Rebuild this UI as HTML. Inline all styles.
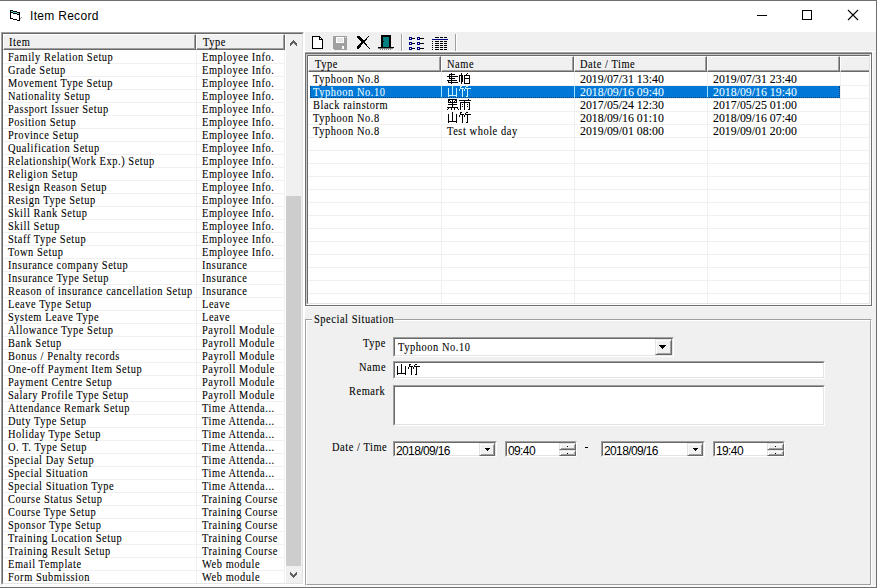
<!DOCTYPE html>
<html><head><meta charset="utf-8"><style>
html,body{margin:0;padding:0}
body{width:877px;height:588px;position:relative;overflow:hidden;background:#f0f0f0;font-family:"Liberation Serif",serif;}
body div{position:absolute}
.t{font:13px "Liberation Serif",serif;line-height:13px;white-space:pre;color:#000;transform:scaleX(0.8);transform-origin:0 0;letter-spacing:0.7px;-webkit-text-stroke:0.1px #000}
.d{font:13px "Liberation Serif",serif;line-height:13px;white-space:pre;color:#000;transform:scaleX(0.91);transform-origin:0 0;-webkit-text-stroke:0.1px #000}
.w{color:#e8fbff;-webkit-text-stroke-color:#e8fbff}
.s{font:12px "Liberation Sans",sans-serif;line-height:13px;white-space:pre;color:#000;letter-spacing:-0.62px}
</style></head><body>
<div style="left:0px;top:0px;width:877px;height:32px;background:#fff;"></div>
<div class="s" style="left:30px;top:10px;letter-spacing:0.3px;color:#000">Item Record</div>
<svg style="position:absolute;left:10px;top:10px" width="13" height="11" viewBox="0 0 13 11" shape-rendering="crispEdges"><rect x="0" y="0" width="3" height="1" fill="#000"/><rect x="0" y="1" width="1" height="1" fill="#000"/><rect x="1" y="1" width="2" height="1" fill="#5cc8c0"/><rect x="3" y="1" width="4" height="1" fill="#000"/><rect x="0" y="2" width="3" height="1" fill="#000"/><rect x="3" y="2" width="4" height="1" fill="#5cc8c0"/><rect x="7" y="2" width="3" height="1" fill="#000"/><rect x="0" y="3" width="1" height="1" fill="#000"/><rect x="1" y="3" width="2" height="1" fill="#fff"/><rect x="3" y="3" width="4" height="1" fill="#000"/><rect x="7" y="3" width="2" height="1" fill="#5cc8c0"/><rect x="9" y="3" width="1" height="1" fill="#000"/><rect x="0" y="4" width="1" height="1" fill="#000"/><rect x="1" y="4" width="6" height="1" fill="#fff"/><rect x="7" y="4" width="3" height="1" fill="#000"/><rect x="0" y="5" width="1" height="1" fill="#000"/><rect x="1" y="5" width="8" height="1" fill="#fff"/><rect x="9" y="5" width="1" height="1" fill="#000"/><rect x="0" y="6" width="1" height="1" fill="#000"/><rect x="1" y="6" width="8" height="1" fill="#fff"/><rect x="9" y="6" width="1" height="1" fill="#000"/><rect x="0" y="7" width="1" height="1" fill="#000"/><rect x="1" y="7" width="8" height="1" fill="#fff"/><rect x="9" y="7" width="1" height="1" fill="#000"/><rect x="11" y="7" width="1" height="1" fill="#999"/><rect x="0" y="8" width="3" height="1" fill="#000"/><rect x="3" y="8" width="6" height="1" fill="#fff"/><rect x="9" y="8" width="1" height="1" fill="#000"/><rect x="10" y="8" width="1" height="1" fill="#999"/><rect x="3" y="9" width="4" height="1" fill="#000"/><rect x="7" y="9" width="2" height="1" fill="#fff"/><rect x="9" y="9" width="1" height="1" fill="#000"/><rect x="7" y="10" width="3" height="1" fill="#000"/></svg>
<div style="left:757px;top:15px;width:10px;height:1px;background:#000;"></div>
<div style="left:802px;top:10px;width:10px;height:10px;background:transparent;border:1px solid #000;box-sizing:border-box"></div>
<svg style="position:absolute;left:847px;top:9px" width="12" height="12" viewBox="0 0 12 12"><path d="M1 1L11 11M11 1L1 11" stroke="#000" stroke-width="1.1"/></svg>
<div style="left:1px;top:32px;width:303px;height:553px;background:#fff;box-sizing:border-box;border-top:1px solid #a0a0a0;border-left:1px solid #a0a0a0;border-right:1px solid #fff;border-bottom:1px solid #fff"></div>
<div style="left:2px;top:33px;width:301px;height:551px;background:#fff;box-sizing:border-box;border-top:1px solid #696969;border-left:1px solid #696969;border-right:1px solid #e3e3e3;border-bottom:1px solid #e3e3e3"></div>
<div style="left:3px;top:34px;width:193px;height:16px;background:#f0f0f0;box-sizing:border-box;border-top:1px solid #fff;border-left:1px solid #fff;border-right:1px solid #696969;border-bottom:1px solid #696969;box-shadow:inset -1px -1px 0 #a0a0a0"></div>
<div style="left:196px;top:34px;width:89px;height:16px;background:#f0f0f0;box-sizing:border-box;border-top:1px solid #fff;border-left:1px solid #fff;border-right:1px solid #696969;border-bottom:1px solid #696969;box-shadow:inset -1px -1px 0 #a0a0a0"></div>
<div class="t" style="left:9px;top:35px;">Item</div>
<div class="t" style="left:203px;top:35px;">Type</div>
<div style="left:3px;top:63px;width:282px;height:1px;background:#f0f0f0;"></div>
<div style="left:3px;top:76px;width:282px;height:1px;background:#f0f0f0;"></div>
<div style="left:3px;top:89px;width:282px;height:1px;background:#f0f0f0;"></div>
<div style="left:3px;top:102px;width:282px;height:1px;background:#f0f0f0;"></div>
<div style="left:3px;top:115px;width:282px;height:1px;background:#f0f0f0;"></div>
<div style="left:3px;top:128px;width:282px;height:1px;background:#f0f0f0;"></div>
<div style="left:3px;top:141px;width:282px;height:1px;background:#f0f0f0;"></div>
<div style="left:3px;top:154px;width:282px;height:1px;background:#f0f0f0;"></div>
<div style="left:3px;top:167px;width:282px;height:1px;background:#f0f0f0;"></div>
<div style="left:3px;top:180px;width:282px;height:1px;background:#f0f0f0;"></div>
<div style="left:3px;top:193px;width:282px;height:1px;background:#f0f0f0;"></div>
<div style="left:3px;top:206px;width:282px;height:1px;background:#f0f0f0;"></div>
<div style="left:3px;top:219px;width:282px;height:1px;background:#f0f0f0;"></div>
<div style="left:3px;top:232px;width:282px;height:1px;background:#f0f0f0;"></div>
<div style="left:3px;top:245px;width:282px;height:1px;background:#f0f0f0;"></div>
<div style="left:3px;top:258px;width:282px;height:1px;background:#f0f0f0;"></div>
<div style="left:3px;top:271px;width:282px;height:1px;background:#f0f0f0;"></div>
<div style="left:3px;top:284px;width:282px;height:1px;background:#f0f0f0;"></div>
<div style="left:3px;top:297px;width:282px;height:1px;background:#f0f0f0;"></div>
<div style="left:3px;top:310px;width:282px;height:1px;background:#f0f0f0;"></div>
<div style="left:3px;top:323px;width:282px;height:1px;background:#f0f0f0;"></div>
<div style="left:3px;top:336px;width:282px;height:1px;background:#f0f0f0;"></div>
<div style="left:3px;top:349px;width:282px;height:1px;background:#f0f0f0;"></div>
<div style="left:3px;top:362px;width:282px;height:1px;background:#f0f0f0;"></div>
<div style="left:3px;top:375px;width:282px;height:1px;background:#f0f0f0;"></div>
<div style="left:3px;top:388px;width:282px;height:1px;background:#f0f0f0;"></div>
<div style="left:3px;top:401px;width:282px;height:1px;background:#f0f0f0;"></div>
<div style="left:3px;top:414px;width:282px;height:1px;background:#f0f0f0;"></div>
<div style="left:3px;top:427px;width:282px;height:1px;background:#f0f0f0;"></div>
<div style="left:3px;top:440px;width:282px;height:1px;background:#f0f0f0;"></div>
<div style="left:3px;top:453px;width:282px;height:1px;background:#f0f0f0;"></div>
<div style="left:3px;top:466px;width:282px;height:1px;background:#f0f0f0;"></div>
<div style="left:3px;top:479px;width:282px;height:1px;background:#f0f0f0;"></div>
<div style="left:3px;top:492px;width:282px;height:1px;background:#f0f0f0;"></div>
<div style="left:3px;top:505px;width:282px;height:1px;background:#f0f0f0;"></div>
<div style="left:3px;top:518px;width:282px;height:1px;background:#f0f0f0;"></div>
<div style="left:3px;top:531px;width:282px;height:1px;background:#f0f0f0;"></div>
<div style="left:3px;top:544px;width:282px;height:1px;background:#f0f0f0;"></div>
<div style="left:3px;top:557px;width:282px;height:1px;background:#f0f0f0;"></div>
<div style="left:3px;top:570px;width:282px;height:1px;background:#f0f0f0;"></div>
<div style="left:196px;top:50px;width:1px;height:533px;background:#f0f0f0;"></div>
<div style="left:284px;top:50px;width:1px;height:533px;background:#f0f0f0;"></div>
<div class="t" style="left:8px;top:50px;">Family Relation Setup</div>
<div class="t" style="left:202px;top:50px;">Employee Info.</div>
<div class="t" style="left:8px;top:63px;">Grade Setup</div>
<div class="t" style="left:202px;top:63px;">Employee Info.</div>
<div class="t" style="left:8px;top:76px;">Movement Type Setup</div>
<div class="t" style="left:202px;top:76px;">Employee Info.</div>
<div class="t" style="left:8px;top:89px;">Nationality Setup</div>
<div class="t" style="left:202px;top:89px;">Employee Info.</div>
<div class="t" style="left:8px;top:102px;">Passport Issuer Setup</div>
<div class="t" style="left:202px;top:102px;">Employee Info.</div>
<div class="t" style="left:8px;top:115px;">Position Setup</div>
<div class="t" style="left:202px;top:115px;">Employee Info.</div>
<div class="t" style="left:8px;top:128px;">Province Setup</div>
<div class="t" style="left:202px;top:128px;">Employee Info.</div>
<div class="t" style="left:8px;top:141px;">Qualification Setup</div>
<div class="t" style="left:202px;top:141px;">Employee Info.</div>
<div class="t" style="left:8px;top:154px;">Relationship(Work Exp.) Setup</div>
<div class="t" style="left:202px;top:154px;">Employee Info.</div>
<div class="t" style="left:8px;top:167px;">Religion Setup</div>
<div class="t" style="left:202px;top:167px;">Employee Info.</div>
<div class="t" style="left:8px;top:180px;">Resign Reason Setup</div>
<div class="t" style="left:202px;top:180px;">Employee Info.</div>
<div class="t" style="left:8px;top:193px;">Resign Type Setup</div>
<div class="t" style="left:202px;top:193px;">Employee Info.</div>
<div class="t" style="left:8px;top:206px;">Skill Rank Setup</div>
<div class="t" style="left:202px;top:206px;">Employee Info.</div>
<div class="t" style="left:8px;top:219px;">Skill Setup</div>
<div class="t" style="left:202px;top:219px;">Employee Info.</div>
<div class="t" style="left:8px;top:232px;">Staff Type Setup</div>
<div class="t" style="left:202px;top:232px;">Employee Info.</div>
<div class="t" style="left:8px;top:245px;">Town Setup</div>
<div class="t" style="left:202px;top:245px;">Employee Info.</div>
<div class="t" style="left:8px;top:258px;">Insurance company Setup</div>
<div class="t" style="left:202px;top:258px;">Insurance</div>
<div class="t" style="left:8px;top:271px;">Insurance Type Setup</div>
<div class="t" style="left:202px;top:271px;">Insurance</div>
<div class="t" style="left:8px;top:284px;">Reason of insurance cancellation Setup</div>
<div class="t" style="left:202px;top:284px;">Insurance</div>
<div class="t" style="left:8px;top:297px;">Leave Type Setup</div>
<div class="t" style="left:202px;top:297px;">Leave</div>
<div class="t" style="left:8px;top:310px;">System Leave Type</div>
<div class="t" style="left:202px;top:310px;">Leave</div>
<div class="t" style="left:8px;top:323px;">Allowance Type Setup</div>
<div class="t" style="left:202px;top:323px;">Payroll Module</div>
<div class="t" style="left:8px;top:336px;">Bank Setup</div>
<div class="t" style="left:202px;top:336px;">Payroll Module</div>
<div class="t" style="left:8px;top:349px;">Bonus / Penalty records</div>
<div class="t" style="left:202px;top:349px;">Payroll Module</div>
<div class="t" style="left:8px;top:362px;">One-off Payment Item Setup</div>
<div class="t" style="left:202px;top:362px;">Payroll Module</div>
<div class="t" style="left:8px;top:375px;">Payment Centre Setup</div>
<div class="t" style="left:202px;top:375px;">Payroll Module</div>
<div class="t" style="left:8px;top:388px;">Salary Profile Type Setup</div>
<div class="t" style="left:202px;top:388px;">Payroll Module</div>
<div class="t" style="left:8px;top:401px;">Attendance Remark Setup</div>
<div class="t" style="left:202px;top:401px;">Time Attenda...</div>
<div class="t" style="left:8px;top:414px;">Duty Type Setup</div>
<div class="t" style="left:202px;top:414px;">Time Attenda...</div>
<div class="t" style="left:8px;top:427px;">Holiday Type Setup</div>
<div class="t" style="left:202px;top:427px;">Time Attenda...</div>
<div class="t" style="left:8px;top:440px;">O. T. Type Setup</div>
<div class="t" style="left:202px;top:440px;">Time Attenda...</div>
<div class="t" style="left:8px;top:453px;">Special Day Setup</div>
<div class="t" style="left:202px;top:453px;">Time Attenda...</div>
<div class="t" style="left:8px;top:466px;">Special Situation</div>
<div class="t" style="left:202px;top:466px;">Time Attenda...</div>
<div class="t" style="left:8px;top:479px;">Special Situation Type</div>
<div class="t" style="left:202px;top:479px;">Time Attenda...</div>
<div class="t" style="left:8px;top:492px;">Course Status Setup</div>
<div class="t" style="left:202px;top:492px;">Training Course</div>
<div class="t" style="left:8px;top:505px;">Course Type Setup</div>
<div class="t" style="left:202px;top:505px;">Training Course</div>
<div class="t" style="left:8px;top:518px;">Sponsor Type Setup</div>
<div class="t" style="left:202px;top:518px;">Training Course</div>
<div class="t" style="left:8px;top:531px;">Training Location Setup</div>
<div class="t" style="left:202px;top:531px;">Training Course</div>
<div class="t" style="left:8px;top:544px;">Training Result Setup</div>
<div class="t" style="left:202px;top:544px;">Training Course</div>
<div class="t" style="left:8px;top:557px;">Email Template</div>
<div class="t" style="left:202px;top:557px;">Web module</div>
<div class="t" style="left:8px;top:570px;">Form Submission</div>
<div class="t" style="left:202px;top:570px;">Web module</div>
<div style="left:286px;top:34px;width:16px;height:549px;background:#f0f0f0;"></div>
<div style="left:286px;top:196px;width:15px;height:370px;background:#cdcdcd;"></div>
<svg style="position:absolute;left:290px;top:40px" width="7" height="6" viewBox="0 0 7 6" shape-rendering="crispEdges"><rect x="3" y="0" width="1" height="1" fill="#606060"/><rect x="2" y="1" width="3" height="1" fill="#606060"/><rect x="1" y="2" width="5" height="1" fill="#606060"/><rect x="0" y="3" width="3" height="1" fill="#606060"/><rect x="4" y="3" width="3" height="1" fill="#606060"/><rect x="0" y="4" width="2" height="1" fill="#606060"/><rect x="5" y="4" width="2" height="1" fill="#606060"/><rect x="0" y="5" width="1" height="1" fill="#606060"/><rect x="6" y="5" width="1" height="1" fill="#606060"/></svg>
<svg style="position:absolute;left:290px;top:572px" width="7" height="6" viewBox="0 0 7 6" shape-rendering="crispEdges"><rect x="0" y="0" width="1" height="1" fill="#606060"/><rect x="6" y="0" width="1" height="1" fill="#606060"/><rect x="0" y="1" width="2" height="1" fill="#606060"/><rect x="5" y="1" width="2" height="1" fill="#606060"/><rect x="0" y="2" width="3" height="1" fill="#606060"/><rect x="4" y="2" width="3" height="1" fill="#606060"/><rect x="1" y="3" width="5" height="1" fill="#606060"/><rect x="2" y="4" width="3" height="1" fill="#606060"/><rect x="3" y="5" width="1" height="1" fill="#606060"/></svg>
<div style="left:304px;top:32px;width:1px;height:553px;background:#fff;"></div>
<div style="left:401px;top:34px;width:1px;height:18px;background:#a0a0a0;"></div>
<div style="left:402px;top:34px;width:1px;height:18px;background:#fff;"></div>
<div style="left:455px;top:34px;width:1px;height:18px;background:#a0a0a0;"></div>
<div style="left:456px;top:34px;width:1px;height:18px;background:#fff;"></div>
<svg style="position:absolute;left:312px;top:36px" width="11" height="13" viewBox="0 0 11 13" shape-rendering="crispEdges"><rect x="0" y="0" width="8" height="1" fill="#000"/><rect x="0" y="1" width="1" height="1" fill="#000"/><rect x="1" y="1" width="6" height="1" fill="#fff"/><rect x="7" y="1" width="2" height="1" fill="#000"/><rect x="0" y="2" width="1" height="1" fill="#000"/><rect x="1" y="2" width="6" height="1" fill="#fff"/><rect x="7" y="2" width="1" height="1" fill="#000"/><rect x="8" y="2" width="1" height="1" fill="#fff"/><rect x="9" y="2" width="1" height="1" fill="#000"/><rect x="0" y="3" width="1" height="1" fill="#000"/><rect x="1" y="3" width="6" height="1" fill="#fff"/><rect x="7" y="3" width="4" height="1" fill="#000"/><rect x="0" y="4" width="1" height="1" fill="#000"/><rect x="1" y="4" width="9" height="1" fill="#fff"/><rect x="10" y="4" width="1" height="1" fill="#000"/><rect x="0" y="5" width="1" height="1" fill="#000"/><rect x="1" y="5" width="9" height="1" fill="#fff"/><rect x="10" y="5" width="1" height="1" fill="#000"/><rect x="0" y="6" width="1" height="1" fill="#000"/><rect x="1" y="6" width="9" height="1" fill="#fff"/><rect x="10" y="6" width="1" height="1" fill="#000"/><rect x="0" y="7" width="1" height="1" fill="#000"/><rect x="1" y="7" width="9" height="1" fill="#fff"/><rect x="10" y="7" width="1" height="1" fill="#000"/><rect x="0" y="8" width="1" height="1" fill="#000"/><rect x="1" y="8" width="9" height="1" fill="#fff"/><rect x="10" y="8" width="1" height="1" fill="#000"/><rect x="0" y="9" width="1" height="1" fill="#000"/><rect x="1" y="9" width="9" height="1" fill="#fff"/><rect x="10" y="9" width="1" height="1" fill="#000"/><rect x="0" y="10" width="1" height="1" fill="#000"/><rect x="1" y="10" width="9" height="1" fill="#fff"/><rect x="10" y="10" width="1" height="1" fill="#000"/><rect x="0" y="11" width="1" height="1" fill="#000"/><rect x="1" y="11" width="9" height="1" fill="#fff"/><rect x="10" y="11" width="1" height="1" fill="#000"/><rect x="0" y="12" width="11" height="1" fill="#000"/></svg>
<svg style="position:absolute;left:333px;top:36px" width="14" height="14" viewBox="0 0 14 14" shape-rendering="crispEdges"><rect x="0" y="0" width="14" height="1" fill="#a0a0a0"/><rect x="0" y="1" width="3" height="1" fill="#a0a0a0"/><rect x="3" y="1" width="8" height="1" fill="#fff"/><rect x="11" y="1" width="1" height="1" fill="#a0a0a0"/><rect x="12" y="1" width="1" height="1" fill="#fff"/><rect x="13" y="1" width="1" height="1" fill="#a0a0a0"/><rect x="0" y="2" width="3" height="1" fill="#a0a0a0"/><rect x="3" y="2" width="1" height="1" fill="#fff"/><rect x="4" y="2" width="6" height="1" fill="#e6e6e6"/><rect x="10" y="2" width="1" height="1" fill="#fff"/><rect x="11" y="2" width="3" height="1" fill="#a0a0a0"/><rect x="0" y="3" width="3" height="1" fill="#a0a0a0"/><rect x="3" y="3" width="1" height="1" fill="#fff"/><rect x="4" y="3" width="6" height="1" fill="#e6e6e6"/><rect x="10" y="3" width="1" height="1" fill="#fff"/><rect x="11" y="3" width="3" height="1" fill="#a0a0a0"/><rect x="0" y="4" width="3" height="1" fill="#a0a0a0"/><rect x="3" y="4" width="1" height="1" fill="#fff"/><rect x="4" y="4" width="6" height="1" fill="#e6e6e6"/><rect x="10" y="4" width="1" height="1" fill="#fff"/><rect x="11" y="4" width="3" height="1" fill="#a0a0a0"/><rect x="0" y="5" width="3" height="1" fill="#a0a0a0"/><rect x="3" y="5" width="1" height="1" fill="#fff"/><rect x="4" y="5" width="6" height="1" fill="#e6e6e6"/><rect x="10" y="5" width="1" height="1" fill="#fff"/><rect x="11" y="5" width="3" height="1" fill="#a0a0a0"/><rect x="0" y="6" width="3" height="1" fill="#a0a0a0"/><rect x="3" y="6" width="8" height="1" fill="#fff"/><rect x="11" y="6" width="3" height="1" fill="#a0a0a0"/><rect x="0" y="7" width="14" height="1" fill="#a0a0a0"/><rect x="0" y="8" width="14" height="1" fill="#a0a0a0"/><rect x="0" y="9" width="14" height="1" fill="#a0a0a0"/><rect x="0" y="10" width="9" height="1" fill="#a0a0a0"/><rect x="9" y="10" width="2" height="1" fill="#fff"/><rect x="11" y="10" width="3" height="1" fill="#a0a0a0"/><rect x="0" y="11" width="9" height="1" fill="#a0a0a0"/><rect x="9" y="11" width="2" height="1" fill="#fff"/><rect x="11" y="11" width="3" height="1" fill="#a0a0a0"/><rect x="0" y="12" width="9" height="1" fill="#a0a0a0"/><rect x="9" y="12" width="2" height="1" fill="#fff"/><rect x="11" y="12" width="3" height="1" fill="#a0a0a0"/><rect x="0" y="13" width="1" height="1" fill="#fff"/><rect x="1" y="13" width="13" height="1" fill="#a0a0a0"/></svg>
<svg style="position:absolute;left:357px;top:36px" width="13" height="13" viewBox="0 0 13 13" shape-rendering="crispEdges"><rect x="0" y="0" width="3" height="1" fill="#000"/><rect x="11" y="0" width="1" height="1" fill="#000"/><rect x="0" y="1" width="4" height="1" fill="#000"/><rect x="10" y="1" width="1" height="1" fill="#000"/><rect x="1" y="2" width="4" height="1" fill="#000"/><rect x="9" y="2" width="1" height="1" fill="#000"/><rect x="2" y="3" width="4" height="1" fill="#000"/><rect x="8" y="3" width="2" height="1" fill="#000"/><rect x="3" y="4" width="6" height="1" fill="#000"/><rect x="4" y="5" width="4" height="1" fill="#000"/><rect x="4" y="6" width="4" height="1" fill="#000"/><rect x="3" y="7" width="3" height="1" fill="#000"/><rect x="7" y="7" width="2" height="1" fill="#000"/><rect x="2" y="8" width="3" height="1" fill="#000"/><rect x="8" y="8" width="2" height="1" fill="#000"/><rect x="1" y="9" width="3" height="1" fill="#000"/><rect x="9" y="9" width="1" height="1" fill="#000"/><rect x="0" y="10" width="4" height="1" fill="#000"/><rect x="10" y="10" width="1" height="1" fill="#000"/><rect x="0" y="11" width="3" height="1" fill="#000"/><rect x="11" y="11" width="1" height="1" fill="#000"/><rect x="0" y="12" width="2" height="1" fill="#000"/><rect x="12" y="12" width="1" height="1" fill="#000"/></svg>
<svg style="position:absolute;left:378px;top:35px" width="16" height="15" viewBox="0 0 16 15" shape-rendering="crispEdges"><rect x="3" y="0" width="10" height="1" fill="#000"/><rect x="3" y="1" width="10" height="1" fill="#000"/><rect x="3" y="2" width="2" height="1" fill="#000"/><rect x="5" y="2" width="6" height="1" fill="#008080"/><rect x="11" y="2" width="2" height="1" fill="#000"/><rect x="3" y="3" width="2" height="1" fill="#000"/><rect x="5" y="3" width="6" height="1" fill="#008080"/><rect x="11" y="3" width="2" height="1" fill="#000"/><rect x="3" y="4" width="2" height="1" fill="#000"/><rect x="5" y="4" width="6" height="1" fill="#008080"/><rect x="11" y="4" width="2" height="1" fill="#000"/><rect x="3" y="5" width="2" height="1" fill="#000"/><rect x="5" y="5" width="6" height="1" fill="#008080"/><rect x="11" y="5" width="2" height="1" fill="#000"/><rect x="3" y="6" width="3" height="1" fill="#000"/><rect x="6" y="6" width="5" height="1" fill="#008080"/><rect x="11" y="6" width="2" height="1" fill="#000"/><rect x="3" y="7" width="2" height="1" fill="#000"/><rect x="5" y="7" width="6" height="1" fill="#008080"/><rect x="11" y="7" width="2" height="1" fill="#000"/><rect x="3" y="8" width="2" height="1" fill="#000"/><rect x="5" y="8" width="6" height="1" fill="#008080"/><rect x="11" y="8" width="2" height="1" fill="#000"/><rect x="3" y="9" width="2" height="1" fill="#000"/><rect x="5" y="9" width="6" height="1" fill="#008080"/><rect x="11" y="9" width="2" height="1" fill="#000"/><rect x="3" y="10" width="2" height="1" fill="#000"/><rect x="5" y="10" width="6" height="1" fill="#008080"/><rect x="11" y="10" width="2" height="1" fill="#000"/><rect x="3" y="11" width="2" height="1" fill="#000"/><rect x="5" y="11" width="6" height="1" fill="#008080"/><rect x="11" y="11" width="2" height="1" fill="#000"/><rect x="0" y="12" width="16" height="1" fill="#000"/><rect x="0" y="13" width="15" height="1" fill="#808080"/><rect x="2" y="14" width="1" height="1" fill="#808080"/><rect x="4" y="14" width="1" height="1" fill="#808080"/><rect x="6" y="14" width="1" height="1" fill="#808080"/><rect x="8" y="14" width="1" height="1" fill="#808080"/><rect x="10" y="14" width="1" height="1" fill="#808080"/><rect x="12" y="14" width="1" height="1" fill="#808080"/></svg>
<svg style="position:absolute;left:409px;top:37px" width="16" height="13" viewBox="0 0 16 13" shape-rendering="crispEdges"><rect x="0" y="0" width="3" height="1" fill="#000080"/><rect x="8" y="0" width="3" height="1" fill="#000080"/><rect x="0" y="1" width="1" height="1" fill="#000080"/><rect x="1" y="1" width="1" height="1" fill="#fff"/><rect x="2" y="1" width="1" height="1" fill="#000080"/><rect x="3" y="1" width="3" height="1" fill="#000"/><rect x="8" y="1" width="1" height="1" fill="#000080"/><rect x="9" y="1" width="1" height="1" fill="#fff"/><rect x="10" y="1" width="1" height="1" fill="#000080"/><rect x="11" y="1" width="4" height="1" fill="#000"/><rect x="0" y="2" width="3" height="1" fill="#000080"/><rect x="8" y="2" width="3" height="1" fill="#000080"/><rect x="0" y="5" width="3" height="1" fill="#000080"/><rect x="8" y="5" width="3" height="1" fill="#000080"/><rect x="0" y="6" width="1" height="1" fill="#000080"/><rect x="1" y="6" width="1" height="1" fill="#fff"/><rect x="2" y="6" width="1" height="1" fill="#000080"/><rect x="3" y="6" width="3" height="1" fill="#000"/><rect x="8" y="6" width="1" height="1" fill="#000080"/><rect x="9" y="6" width="1" height="1" fill="#fff"/><rect x="10" y="6" width="1" height="1" fill="#000080"/><rect x="11" y="6" width="4" height="1" fill="#000"/><rect x="0" y="7" width="3" height="1" fill="#000080"/><rect x="8" y="7" width="3" height="1" fill="#000080"/><rect x="0" y="10" width="3" height="1" fill="#000080"/><rect x="8" y="10" width="3" height="1" fill="#000080"/><rect x="0" y="11" width="1" height="1" fill="#000080"/><rect x="1" y="11" width="1" height="1" fill="#fff"/><rect x="2" y="11" width="1" height="1" fill="#000080"/><rect x="3" y="11" width="3" height="1" fill="#000"/><rect x="8" y="11" width="1" height="1" fill="#000080"/><rect x="9" y="11" width="1" height="1" fill="#fff"/><rect x="10" y="11" width="1" height="1" fill="#000080"/><rect x="11" y="11" width="4" height="1" fill="#000"/><rect x="0" y="12" width="3" height="1" fill="#000080"/><rect x="8" y="12" width="3" height="1" fill="#000080"/></svg>
<svg style="position:absolute;left:432px;top:37px" width="16" height="13" viewBox="0 0 16 13" shape-rendering="crispEdges"><rect x="3" y="0" width="4" height="1" fill="#000"/><rect x="8" y="0" width="3" height="1" fill="#000"/><rect x="12" y="0" width="3" height="1" fill="#000"/><rect x="0" y="2" width="16" height="1" fill="#000080"/><rect x="0" y="4" width="1" height="1" fill="#000"/><rect x="3" y="4" width="4" height="1" fill="#000"/><rect x="8" y="4" width="3" height="1" fill="#000"/><rect x="12" y="4" width="3" height="1" fill="#000"/><rect x="0" y="6" width="1" height="1" fill="#000"/><rect x="3" y="6" width="4" height="1" fill="#000"/><rect x="8" y="6" width="3" height="1" fill="#000"/><rect x="12" y="6" width="3" height="1" fill="#000"/><rect x="0" y="8" width="1" height="1" fill="#000"/><rect x="3" y="8" width="4" height="1" fill="#000"/><rect x="8" y="8" width="3" height="1" fill="#000"/><rect x="12" y="8" width="3" height="1" fill="#000"/><rect x="0" y="10" width="1" height="1" fill="#000"/><rect x="3" y="10" width="4" height="1" fill="#000"/><rect x="8" y="10" width="3" height="1" fill="#000"/><rect x="12" y="10" width="3" height="1" fill="#000"/><rect x="0" y="12" width="1" height="1" fill="#000"/><rect x="3" y="12" width="4" height="1" fill="#000"/><rect x="8" y="12" width="3" height="1" fill="#000"/><rect x="12" y="12" width="3" height="1" fill="#000"/></svg>
<div style="left:305px;top:51px;width:571px;height:1px;background:#fff;"></div>
<div style="left:305px;top:52px;width:567px;height:254px;background:#fff;box-sizing:border-box;border:1px solid #6e6e6e"></div>
<div style="left:305px;top:52px;width:567px;height:1px;background:#a0a0a0;"></div>
<div style="left:305px;top:53px;width:567px;height:1px;background:#6e6e6e;"></div>
<div style="left:872px;top:52px;width:1px;height:255px;background:#fafafa;"></div>
<div style="left:305px;top:306px;width:568px;height:1px;background:#fafafa;"></div>
<div style="left:306px;top:54px;width:565px;height:251px;background:#fff;box-sizing:border-box;border-top:1px solid #c8c8c8;border-left:1px solid #c8c8c8;border-right:1px solid #fff;border-bottom:1px solid #fff"></div>
<div style="left:307px;top:55px;width:563px;height:249px;background:#fff;box-sizing:border-box;border-top:1px solid #696969;border-left:1px solid #696969;border-right:1px solid #e3e3e3;border-bottom:1px solid #e3e3e3"></div>
<div style="left:308px;top:56px;width:133px;height:16px;background:#f0f0f0;box-sizing:border-box;border-top:1px solid #fff;border-left:1px solid #fff;border-right:1px solid #696969;border-bottom:1px solid #696969;box-shadow:inset -1px -1px 0 #a0a0a0"></div>
<div style="left:441px;top:56px;width:133px;height:16px;background:#f0f0f0;box-sizing:border-box;border-top:1px solid #fff;border-left:1px solid #fff;border-right:1px solid #696969;border-bottom:1px solid #696969;box-shadow:inset -1px -1px 0 #a0a0a0"></div>
<div style="left:574px;top:56px;width:133px;height:16px;background:#f0f0f0;box-sizing:border-box;border-top:1px solid #fff;border-left:1px solid #fff;border-right:1px solid #696969;border-bottom:1px solid #696969;box-shadow:inset -1px -1px 0 #a0a0a0"></div>
<div style="left:707px;top:56px;width:133px;height:16px;background:#f0f0f0;box-sizing:border-box;border-top:1px solid #fff;border-left:1px solid #fff;border-right:1px solid #696969;border-bottom:1px solid #696969;box-shadow:inset -1px -1px 0 #a0a0a0"></div>
<div style="left:840px;top:56px;width:29px;height:16px;background:#f0f0f0;box-sizing:border-box;border-top:1px solid #fff;border-left:1px solid #fff;border-bottom:1px solid #696969;box-shadow:inset 0 -1px 0 #a0a0a0"></div>
<div class="t" style="left:315px;top:57px;">Type</div>
<div class="t" style="left:447px;top:57px;">Name</div>
<div class="t" style="left:580px;top:57px;">Date / Time</div>
<div style="left:308px;top:85px;width:561px;height:1px;background:#f0f0f0;"></div>
<div style="left:308px;top:98px;width:561px;height:1px;background:#f0f0f0;"></div>
<div style="left:308px;top:111px;width:561px;height:1px;background:#f0f0f0;"></div>
<div style="left:308px;top:124px;width:561px;height:1px;background:#f0f0f0;"></div>
<div style="left:308px;top:137px;width:561px;height:1px;background:#f0f0f0;"></div>
<div style="left:308px;top:150px;width:561px;height:1px;background:#f0f0f0;"></div>
<div style="left:308px;top:163px;width:561px;height:1px;background:#f0f0f0;"></div>
<div style="left:308px;top:176px;width:561px;height:1px;background:#f0f0f0;"></div>
<div style="left:308px;top:189px;width:561px;height:1px;background:#f0f0f0;"></div>
<div style="left:308px;top:202px;width:561px;height:1px;background:#f0f0f0;"></div>
<div style="left:308px;top:215px;width:561px;height:1px;background:#f0f0f0;"></div>
<div style="left:308px;top:228px;width:561px;height:1px;background:#f0f0f0;"></div>
<div style="left:308px;top:241px;width:561px;height:1px;background:#f0f0f0;"></div>
<div style="left:308px;top:254px;width:561px;height:1px;background:#f0f0f0;"></div>
<div style="left:308px;top:267px;width:561px;height:1px;background:#f0f0f0;"></div>
<div style="left:308px;top:280px;width:561px;height:1px;background:#f0f0f0;"></div>
<div style="left:308px;top:293px;width:561px;height:1px;background:#f0f0f0;"></div>
<div style="left:441px;top:72px;width:1px;height:231px;background:#f0f0f0;"></div>
<div style="left:574px;top:72px;width:1px;height:231px;background:#f0f0f0;"></div>
<div style="left:707px;top:72px;width:1px;height:231px;background:#f0f0f0;"></div>
<div style="left:840px;top:72px;width:1px;height:231px;background:#f0f0f0;"></div>
<div style="left:310px;top:86px;width:530px;height:12px;background:#0078d7;"></div>
<div style="left:441px;top:86px;width:1px;height:12px;background:#9be7ff;"></div>
<div style="left:574px;top:86px;width:1px;height:12px;background:#9be7ff;"></div>
<div style="left:707px;top:86px;width:1px;height:12px;background:#9be7ff;"></div>
<div style="left:310px;top:86px;width:530px;height:12px;background:transparent;box-sizing:border-box;border-left:1px dotted #0a2a4a;border-right:1px dotted #0a2a4a;border-bottom:1px dotted #0a2a4a;opacity:0.7"></div>
<div class="t" style="left:313px;top:72px;">Typhoon No.8</div>
<svg style="position:absolute;left:447px;top:73px" width="12" height="11" viewBox="0 0 12 11" shape-rendering="crispEdges"><rect x="4" y="0" width="1" height="1" fill="#000"/><rect x="2" y="1" width="6" height="1" fill="#000"/><rect x="2" y="2" width="1" height="1" fill="#000"/><rect x="4" y="2" width="1" height="1" fill="#000"/><rect x="0" y="3" width="11" height="1" fill="#000"/><rect x="2" y="4" width="1" height="1" fill="#000"/><rect x="4" y="4" width="1" height="1" fill="#000"/><rect x="2" y="5" width="6" height="1" fill="#000"/><rect x="4" y="6" width="1" height="1" fill="#000"/><rect x="0" y="7" width="10" height="1" fill="#000"/><rect x="1" y="8" width="1" height="1" fill="#000"/><rect x="4" y="8" width="1" height="1" fill="#000"/><rect x="1" y="9" width="10" height="1" fill="#000"/><rect x="4" y="10" width="1" height="1" fill="#000"/></svg>
<svg style="position:absolute;left:459px;top:73px" width="12" height="11" viewBox="0 0 12 11" shape-rendering="crispEdges"><rect x="2" y="0" width="1" height="1" fill="#000"/><rect x="8" y="0" width="1" height="1" fill="#000"/><rect x="2" y="1" width="1" height="1" fill="#000"/><rect x="7" y="1" width="1" height="1" fill="#000"/><rect x="0" y="2" width="4" height="1" fill="#000"/><rect x="5" y="2" width="6" height="1" fill="#000"/><rect x="0" y="3" width="1" height="1" fill="#000"/><rect x="2" y="3" width="2" height="1" fill="#000"/><rect x="5" y="3" width="1" height="1" fill="#000"/><rect x="10" y="3" width="1" height="1" fill="#000"/><rect x="0" y="4" width="1" height="1" fill="#000"/><rect x="2" y="4" width="2" height="1" fill="#000"/><rect x="5" y="4" width="1" height="1" fill="#000"/><rect x="10" y="4" width="1" height="1" fill="#000"/><rect x="0" y="5" width="1" height="1" fill="#000"/><rect x="2" y="5" width="2" height="1" fill="#000"/><rect x="5" y="5" width="6" height="1" fill="#000"/><rect x="0" y="6" width="1" height="1" fill="#000"/><rect x="2" y="6" width="2" height="1" fill="#000"/><rect x="5" y="6" width="1" height="1" fill="#000"/><rect x="10" y="6" width="1" height="1" fill="#000"/><rect x="0" y="7" width="1" height="1" fill="#000"/><rect x="2" y="7" width="2" height="1" fill="#000"/><rect x="5" y="7" width="1" height="1" fill="#000"/><rect x="10" y="7" width="1" height="1" fill="#000"/><rect x="0" y="8" width="1" height="1" fill="#000"/><rect x="2" y="8" width="2" height="1" fill="#000"/><rect x="5" y="8" width="1" height="1" fill="#000"/><rect x="10" y="8" width="1" height="1" fill="#000"/><rect x="2" y="9" width="1" height="1" fill="#000"/><rect x="5" y="9" width="1" height="1" fill="#000"/><rect x="10" y="9" width="1" height="1" fill="#000"/><rect x="2" y="10" width="1" height="1" fill="#000"/><rect x="5" y="10" width="6" height="1" fill="#000"/></svg>
<div class="d" style="left:580px;top:72px;">2019/07/31 13:40</div>
<div class="d" style="left:713px;top:72px;">2019/07/31 23:40</div>
<div class="t w" style="left:313px;top:85px;">Typhoon No.10</div>
<svg style="position:absolute;left:447px;top:86px" width="12" height="11" viewBox="0 0 12 11" shape-rendering="crispEdges"><rect x="5" y="0" width="1" height="1" fill="#c8f4ff"/><rect x="5" y="1" width="1" height="1" fill="#c8f4ff"/><rect x="1" y="2" width="1" height="1" fill="#c8f4ff"/><rect x="5" y="2" width="1" height="1" fill="#c8f4ff"/><rect x="9" y="2" width="1" height="1" fill="#c8f4ff"/><rect x="1" y="3" width="1" height="1" fill="#c8f4ff"/><rect x="5" y="3" width="1" height="1" fill="#c8f4ff"/><rect x="9" y="3" width="1" height="1" fill="#c8f4ff"/><rect x="1" y="4" width="1" height="1" fill="#c8f4ff"/><rect x="5" y="4" width="1" height="1" fill="#c8f4ff"/><rect x="9" y="4" width="1" height="1" fill="#c8f4ff"/><rect x="1" y="5" width="1" height="1" fill="#c8f4ff"/><rect x="5" y="5" width="1" height="1" fill="#c8f4ff"/><rect x="9" y="5" width="1" height="1" fill="#c8f4ff"/><rect x="1" y="6" width="1" height="1" fill="#c8f4ff"/><rect x="5" y="6" width="1" height="1" fill="#c8f4ff"/><rect x="9" y="6" width="1" height="1" fill="#c8f4ff"/><rect x="1" y="7" width="1" height="1" fill="#c8f4ff"/><rect x="5" y="7" width="1" height="1" fill="#c8f4ff"/><rect x="9" y="7" width="1" height="1" fill="#c8f4ff"/><rect x="1" y="8" width="1" height="1" fill="#c8f4ff"/><rect x="5" y="8" width="1" height="1" fill="#c8f4ff"/><rect x="9" y="8" width="1" height="1" fill="#c8f4ff"/><rect x="1" y="9" width="9" height="1" fill="#c8f4ff"/><rect x="1" y="10" width="1" height="1" fill="#c8f4ff"/><rect x="9" y="10" width="1" height="1" fill="#c8f4ff"/></svg>
<svg style="position:absolute;left:459px;top:86px" width="12" height="11" viewBox="0 0 12 11" shape-rendering="crispEdges"><rect x="1" y="0" width="2" height="1" fill="#c8f4ff"/><rect x="7" y="0" width="2" height="1" fill="#c8f4ff"/><rect x="1" y="1" width="1" height="1" fill="#c8f4ff"/><rect x="6" y="1" width="1" height="1" fill="#c8f4ff"/><rect x="1" y="2" width="4" height="1" fill="#c8f4ff"/><rect x="6" y="2" width="6" height="1" fill="#c8f4ff"/><rect x="0" y="3" width="1" height="1" fill="#c8f4ff"/><rect x="3" y="3" width="1" height="1" fill="#c8f4ff"/><rect x="5" y="3" width="1" height="1" fill="#c8f4ff"/><rect x="8" y="3" width="1" height="1" fill="#c8f4ff"/><rect x="0" y="4" width="1" height="1" fill="#c8f4ff"/><rect x="3" y="4" width="1" height="1" fill="#c8f4ff"/><rect x="5" y="4" width="1" height="1" fill="#c8f4ff"/><rect x="8" y="4" width="1" height="1" fill="#c8f4ff"/><rect x="3" y="5" width="1" height="1" fill="#c8f4ff"/><rect x="8" y="5" width="1" height="1" fill="#c8f4ff"/><rect x="3" y="6" width="1" height="1" fill="#c8f4ff"/><rect x="8" y="6" width="1" height="1" fill="#c8f4ff"/><rect x="3" y="7" width="1" height="1" fill="#c8f4ff"/><rect x="8" y="7" width="1" height="1" fill="#c8f4ff"/><rect x="3" y="8" width="1" height="1" fill="#c8f4ff"/><rect x="8" y="8" width="1" height="1" fill="#c8f4ff"/><rect x="3" y="9" width="1" height="1" fill="#c8f4ff"/><rect x="8" y="9" width="1" height="1" fill="#c8f4ff"/><rect x="3" y="10" width="1" height="1" fill="#c8f4ff"/><rect x="7" y="10" width="2" height="1" fill="#c8f4ff"/></svg>
<div class="d w" style="left:580px;top:85px;">2018/09/16 09:40</div>
<div class="d w" style="left:713px;top:85px;">2018/09/16 19:40</div>
<div class="t" style="left:313px;top:98px;">Black rainstorm</div>
<svg style="position:absolute;left:447px;top:99px" width="12" height="11" viewBox="0 0 12 11" shape-rendering="crispEdges"><rect x="1" y="0" width="9" height="1" fill="#000"/><rect x="1" y="1" width="2" height="1" fill="#000"/><rect x="5" y="1" width="1" height="1" fill="#000"/><rect x="8" y="1" width="2" height="1" fill="#000"/><rect x="1" y="2" width="1" height="1" fill="#000"/><rect x="3" y="2" width="1" height="1" fill="#000"/><rect x="5" y="2" width="1" height="1" fill="#000"/><rect x="7" y="2" width="1" height="1" fill="#000"/><rect x="9" y="2" width="1" height="1" fill="#000"/><rect x="1" y="3" width="9" height="1" fill="#000"/><rect x="5" y="4" width="1" height="1" fill="#000"/><rect x="1" y="5" width="9" height="1" fill="#000"/><rect x="5" y="6" width="1" height="1" fill="#000"/><rect x="5" y="7" width="1" height="1" fill="#000"/><rect x="0" y="8" width="11" height="1" fill="#000"/><rect x="1" y="9" width="1" height="1" fill="#000"/><rect x="4" y="9" width="1" height="1" fill="#000"/><rect x="7" y="9" width="1" height="1" fill="#000"/><rect x="10" y="9" width="1" height="1" fill="#000"/><rect x="0" y="10" width="1" height="1" fill="#000"/><rect x="4" y="10" width="1" height="1" fill="#000"/><rect x="7" y="10" width="1" height="1" fill="#000"/><rect x="11" y="10" width="1" height="1" fill="#000"/></svg>
<svg style="position:absolute;left:459px;top:99px" width="12" height="11" viewBox="0 0 12 11" shape-rendering="crispEdges"><rect x="9" y="0" width="1" height="1" fill="#000"/><rect x="0" y="1" width="12" height="1" fill="#000"/><rect x="5" y="2" width="1" height="1" fill="#000"/><rect x="1" y="3" width="10" height="1" fill="#000"/><rect x="1" y="4" width="1" height="1" fill="#000"/><rect x="5" y="4" width="1" height="1" fill="#000"/><rect x="10" y="4" width="1" height="1" fill="#000"/><rect x="1" y="5" width="1" height="1" fill="#000"/><rect x="3" y="5" width="1" height="1" fill="#000"/><rect x="5" y="5" width="1" height="1" fill="#000"/><rect x="8" y="5" width="1" height="1" fill="#000"/><rect x="10" y="5" width="1" height="1" fill="#000"/><rect x="1" y="6" width="1" height="1" fill="#000"/><rect x="5" y="6" width="1" height="1" fill="#000"/><rect x="10" y="6" width="1" height="1" fill="#000"/><rect x="1" y="7" width="1" height="1" fill="#000"/><rect x="3" y="7" width="1" height="1" fill="#000"/><rect x="5" y="7" width="1" height="1" fill="#000"/><rect x="8" y="7" width="1" height="1" fill="#000"/><rect x="10" y="7" width="1" height="1" fill="#000"/><rect x="1" y="8" width="1" height="1" fill="#000"/><rect x="5" y="8" width="1" height="1" fill="#000"/><rect x="10" y="8" width="1" height="1" fill="#000"/><rect x="1" y="9" width="1" height="1" fill="#000"/><rect x="5" y="9" width="1" height="1" fill="#000"/><rect x="10" y="9" width="1" height="1" fill="#000"/><rect x="1" y="10" width="1" height="1" fill="#000"/><rect x="5" y="10" width="1" height="1" fill="#000"/><rect x="9" y="10" width="2" height="1" fill="#000"/></svg>
<div class="d" style="left:580px;top:98px;">2017/05/24 12:30</div>
<div class="d" style="left:713px;top:98px;">2017/05/25 01:00</div>
<div class="t" style="left:313px;top:111px;">Typhoon No.8</div>
<svg style="position:absolute;left:447px;top:112px" width="12" height="11" viewBox="0 0 12 11" shape-rendering="crispEdges"><rect x="5" y="0" width="1" height="1" fill="#000"/><rect x="5" y="1" width="1" height="1" fill="#000"/><rect x="1" y="2" width="1" height="1" fill="#000"/><rect x="5" y="2" width="1" height="1" fill="#000"/><rect x="9" y="2" width="1" height="1" fill="#000"/><rect x="1" y="3" width="1" height="1" fill="#000"/><rect x="5" y="3" width="1" height="1" fill="#000"/><rect x="9" y="3" width="1" height="1" fill="#000"/><rect x="1" y="4" width="1" height="1" fill="#000"/><rect x="5" y="4" width="1" height="1" fill="#000"/><rect x="9" y="4" width="1" height="1" fill="#000"/><rect x="1" y="5" width="1" height="1" fill="#000"/><rect x="5" y="5" width="1" height="1" fill="#000"/><rect x="9" y="5" width="1" height="1" fill="#000"/><rect x="1" y="6" width="1" height="1" fill="#000"/><rect x="5" y="6" width="1" height="1" fill="#000"/><rect x="9" y="6" width="1" height="1" fill="#000"/><rect x="1" y="7" width="1" height="1" fill="#000"/><rect x="5" y="7" width="1" height="1" fill="#000"/><rect x="9" y="7" width="1" height="1" fill="#000"/><rect x="1" y="8" width="1" height="1" fill="#000"/><rect x="5" y="8" width="1" height="1" fill="#000"/><rect x="9" y="8" width="1" height="1" fill="#000"/><rect x="1" y="9" width="9" height="1" fill="#000"/><rect x="1" y="10" width="1" height="1" fill="#000"/><rect x="9" y="10" width="1" height="1" fill="#000"/></svg>
<svg style="position:absolute;left:459px;top:112px" width="12" height="11" viewBox="0 0 12 11" shape-rendering="crispEdges"><rect x="1" y="0" width="2" height="1" fill="#000"/><rect x="7" y="0" width="2" height="1" fill="#000"/><rect x="1" y="1" width="1" height="1" fill="#000"/><rect x="6" y="1" width="1" height="1" fill="#000"/><rect x="1" y="2" width="4" height="1" fill="#000"/><rect x="6" y="2" width="6" height="1" fill="#000"/><rect x="0" y="3" width="1" height="1" fill="#000"/><rect x="3" y="3" width="1" height="1" fill="#000"/><rect x="5" y="3" width="1" height="1" fill="#000"/><rect x="8" y="3" width="1" height="1" fill="#000"/><rect x="0" y="4" width="1" height="1" fill="#000"/><rect x="3" y="4" width="1" height="1" fill="#000"/><rect x="5" y="4" width="1" height="1" fill="#000"/><rect x="8" y="4" width="1" height="1" fill="#000"/><rect x="3" y="5" width="1" height="1" fill="#000"/><rect x="8" y="5" width="1" height="1" fill="#000"/><rect x="3" y="6" width="1" height="1" fill="#000"/><rect x="8" y="6" width="1" height="1" fill="#000"/><rect x="3" y="7" width="1" height="1" fill="#000"/><rect x="8" y="7" width="1" height="1" fill="#000"/><rect x="3" y="8" width="1" height="1" fill="#000"/><rect x="8" y="8" width="1" height="1" fill="#000"/><rect x="3" y="9" width="1" height="1" fill="#000"/><rect x="8" y="9" width="1" height="1" fill="#000"/><rect x="3" y="10" width="1" height="1" fill="#000"/><rect x="7" y="10" width="2" height="1" fill="#000"/></svg>
<div class="d" style="left:580px;top:111px;">2018/09/16 01:10</div>
<div class="d" style="left:713px;top:111px;">2018/09/16 07:40</div>
<div class="t" style="left:313px;top:124px;">Typhoon No.8</div>
<div class="t" style="left:447px;top:124px;">Test whole day</div>
<div class="d" style="left:580px;top:124px;">2019/09/01 08:00</div>
<div class="d" style="left:713px;top:124px;">2019/09/01 20:00</div>
<div style="left:305px;top:319px;width:567px;height:267px;background:transparent;box-sizing:border-box;border-top:1px solid #a0a0a0;border-left:1px solid #a0a0a0;border-right:1px solid #fff;border-bottom:1px solid #fff"></div>
<div style="left:306px;top:320px;width:565px;height:265px;background:transparent;box-sizing:border-box;border-top:1px solid #fff;border-left:1px solid #fff;border-right:1px solid #a0a0a0;border-bottom:1px solid #a0a0a0"></div>
<div style="left:312px;top:313px;width:82px;height:13px;background:#f0f0f0;"></div>
<div class="t" style="left:314px;top:312px;">Special Situation</div>
<div class="t" style="left:363px;top:336px;">Type</div>
<div class="t" style="left:359px;top:360px;">Name</div>
<div class="t" style="left:349px;top:384px;">Remark</div>
<div class="t" style="left:332px;top:440px;">Date / Time</div>
<div style="left:393px;top:337px;width:281px;height:20px;background:#fff;box-sizing:border-box;border-top:1px solid #a0a0a0;border-left:1px solid #a0a0a0;border-right:1px solid #fff;border-bottom:1px solid #fff"></div>
<div style="left:394px;top:338px;width:279px;height:18px;background:#fff;box-sizing:border-box;border-top:1px solid #696969;border-left:1px solid #696969;border-right:1px solid #e3e3e3;border-bottom:1px solid #e3e3e3"></div>
<div style="left:655px;top:339px;width:17px;height:16px;background:#f0f0f0;box-sizing:border-box;border-top:1px solid #e3e3e3;border-left:1px solid #e3e3e3;border-right:1px solid #696969;border-bottom:1px solid #696969;box-shadow:inset 1px 1px 0 #fff,inset -1px -1px 0 #a0a0a0"></div>
<svg style="position:absolute;left:659px;top:345px" width="7" height="4" viewBox="0 0 7 4" shape-rendering="crispEdges"><rect x="0" y="0" width="7" height="1" fill="#000"/><rect x="1" y="1" width="5" height="1" fill="#000"/><rect x="2" y="2" width="3" height="1" fill="#000"/><rect x="3" y="3" width="1" height="1" fill="#000"/></svg>
<div class="t" style="left:398px;top:340px;">Typhoon No.10</div>
<div style="left:393px;top:361px;width:432px;height:18px;background:#fff;box-sizing:border-box;border-top:1px solid #a0a0a0;border-left:1px solid #a0a0a0;border-right:1px solid #fff;border-bottom:1px solid #fff"></div>
<div style="left:394px;top:362px;width:430px;height:16px;background:#fff;box-sizing:border-box;border-top:1px solid #696969;border-left:1px solid #696969;border-right:1px solid #e3e3e3;border-bottom:1px solid #e3e3e3"></div>
<svg style="position:absolute;left:396px;top:364px" width="12" height="11" viewBox="0 0 12 11" shape-rendering="crispEdges"><rect x="5" y="0" width="1" height="1" fill="#000"/><rect x="5" y="1" width="1" height="1" fill="#000"/><rect x="1" y="2" width="1" height="1" fill="#000"/><rect x="5" y="2" width="1" height="1" fill="#000"/><rect x="9" y="2" width="1" height="1" fill="#000"/><rect x="1" y="3" width="1" height="1" fill="#000"/><rect x="5" y="3" width="1" height="1" fill="#000"/><rect x="9" y="3" width="1" height="1" fill="#000"/><rect x="1" y="4" width="1" height="1" fill="#000"/><rect x="5" y="4" width="1" height="1" fill="#000"/><rect x="9" y="4" width="1" height="1" fill="#000"/><rect x="1" y="5" width="1" height="1" fill="#000"/><rect x="5" y="5" width="1" height="1" fill="#000"/><rect x="9" y="5" width="1" height="1" fill="#000"/><rect x="1" y="6" width="1" height="1" fill="#000"/><rect x="5" y="6" width="1" height="1" fill="#000"/><rect x="9" y="6" width="1" height="1" fill="#000"/><rect x="1" y="7" width="1" height="1" fill="#000"/><rect x="5" y="7" width="1" height="1" fill="#000"/><rect x="9" y="7" width="1" height="1" fill="#000"/><rect x="1" y="8" width="1" height="1" fill="#000"/><rect x="5" y="8" width="1" height="1" fill="#000"/><rect x="9" y="8" width="1" height="1" fill="#000"/><rect x="1" y="9" width="9" height="1" fill="#000"/><rect x="1" y="10" width="1" height="1" fill="#000"/><rect x="9" y="10" width="1" height="1" fill="#000"/></svg>
<svg style="position:absolute;left:408px;top:364px" width="12" height="11" viewBox="0 0 12 11" shape-rendering="crispEdges"><rect x="1" y="0" width="2" height="1" fill="#000"/><rect x="7" y="0" width="2" height="1" fill="#000"/><rect x="1" y="1" width="1" height="1" fill="#000"/><rect x="6" y="1" width="1" height="1" fill="#000"/><rect x="1" y="2" width="4" height="1" fill="#000"/><rect x="6" y="2" width="6" height="1" fill="#000"/><rect x="0" y="3" width="1" height="1" fill="#000"/><rect x="3" y="3" width="1" height="1" fill="#000"/><rect x="5" y="3" width="1" height="1" fill="#000"/><rect x="8" y="3" width="1" height="1" fill="#000"/><rect x="0" y="4" width="1" height="1" fill="#000"/><rect x="3" y="4" width="1" height="1" fill="#000"/><rect x="5" y="4" width="1" height="1" fill="#000"/><rect x="8" y="4" width="1" height="1" fill="#000"/><rect x="3" y="5" width="1" height="1" fill="#000"/><rect x="8" y="5" width="1" height="1" fill="#000"/><rect x="3" y="6" width="1" height="1" fill="#000"/><rect x="8" y="6" width="1" height="1" fill="#000"/><rect x="3" y="7" width="1" height="1" fill="#000"/><rect x="8" y="7" width="1" height="1" fill="#000"/><rect x="3" y="8" width="1" height="1" fill="#000"/><rect x="8" y="8" width="1" height="1" fill="#000"/><rect x="3" y="9" width="1" height="1" fill="#000"/><rect x="8" y="9" width="1" height="1" fill="#000"/><rect x="3" y="10" width="1" height="1" fill="#000"/><rect x="7" y="10" width="2" height="1" fill="#000"/></svg>
<div style="left:393px;top:385px;width:432px;height:41px;background:#fff;box-sizing:border-box;border-top:1px solid #a0a0a0;border-left:1px solid #a0a0a0;border-right:1px solid #fff;border-bottom:1px solid #fff"></div>
<div style="left:394px;top:386px;width:430px;height:39px;background:#fff;box-sizing:border-box;border-top:1px solid #696969;border-left:1px solid #696969;border-right:1px solid #e3e3e3;border-bottom:1px solid #e3e3e3"></div>
<div style="left:393px;top:441px;width:104px;height:16px;background:#fff;box-sizing:border-box;border-top:1px solid #a0a0a0;border-left:1px solid #a0a0a0;border-right:1px solid #fff;border-bottom:1px solid #fff"></div>
<div style="left:394px;top:442px;width:102px;height:14px;background:#fff;box-sizing:border-box;border-top:1px solid #696969;border-left:1px solid #696969;border-right:1px solid #e3e3e3;border-bottom:1px solid #e3e3e3"></div>
<div style="left:479px;top:443px;width:16px;height:13px;background:#f0f0f0;box-sizing:border-box;border-top:1px solid #e3e3e3;border-left:1px solid #e3e3e3;border-right:1px solid #696969;border-bottom:1px solid #696969;box-shadow:inset 1px 1px 0 #fff,inset -1px -1px 0 #a0a0a0"></div>
<svg style="position:absolute;left:485px;top:448px" width="5" height="3" viewBox="0 0 5 3" shape-rendering="crispEdges"><rect x="0" y="0" width="5" height="1" fill="#000"/><rect x="1" y="1" width="3" height="1" fill="#000"/><rect x="2" y="2" width="1" height="1" fill="#000"/></svg>
<div class="s" style="left:396px;top:445px;">2018/09/16</div>
<div style="left:505px;top:441px;width:72px;height:16px;background:#fff;box-sizing:border-box;border-top:1px solid #a0a0a0;border-left:1px solid #a0a0a0;border-right:1px solid #fff;border-bottom:1px solid #fff"></div>
<div style="left:506px;top:442px;width:70px;height:14px;background:#fff;box-sizing:border-box;border-top:1px solid #696969;border-left:1px solid #696969;border-right:1px solid #e3e3e3;border-bottom:1px solid #e3e3e3"></div>
<div class="s" style="left:508px;top:445px;">09:40</div>
<div style="left:559px;top:443px;width:17px;height:7px;background:#f0f0f0;box-sizing:border-box;border-top:1px solid #e3e3e3;border-left:1px solid #e3e3e3;border-right:1px solid #696969;border-bottom:1px solid #696969;box-shadow:inset 1px 1px 0 #fff,inset -1px -1px 0 #a0a0a0"></div>
<div style="left:559px;top:450px;width:17px;height:6px;background:#f0f0f0;box-sizing:border-box;border-top:1px solid #e3e3e3;border-left:1px solid #e3e3e3;border-right:1px solid #696969;border-bottom:1px solid #696969;box-shadow:inset 1px 1px 0 #fff,inset -1px -1px 0 #a0a0a0"></div>
<div style="left:567px;top:446px;width:1px;height:1px;background:#000;"></div>
<div style="left:567px;top:453px;width:1px;height:1px;background:#000;"></div>
<div style="left:585px;top:447px;width:3px;height:1px;background:#000;"></div>
<div style="left:601px;top:441px;width:104px;height:16px;background:#fff;box-sizing:border-box;border-top:1px solid #a0a0a0;border-left:1px solid #a0a0a0;border-right:1px solid #fff;border-bottom:1px solid #fff"></div>
<div style="left:602px;top:442px;width:102px;height:14px;background:#fff;box-sizing:border-box;border-top:1px solid #696969;border-left:1px solid #696969;border-right:1px solid #e3e3e3;border-bottom:1px solid #e3e3e3"></div>
<div style="left:687px;top:443px;width:16px;height:13px;background:#f0f0f0;box-sizing:border-box;border-top:1px solid #e3e3e3;border-left:1px solid #e3e3e3;border-right:1px solid #696969;border-bottom:1px solid #696969;box-shadow:inset 1px 1px 0 #fff,inset -1px -1px 0 #a0a0a0"></div>
<svg style="position:absolute;left:693px;top:448px" width="5" height="3" viewBox="0 0 5 3" shape-rendering="crispEdges"><rect x="0" y="0" width="5" height="1" fill="#000"/><rect x="1" y="1" width="3" height="1" fill="#000"/><rect x="2" y="2" width="1" height="1" fill="#000"/></svg>
<div class="s" style="left:604px;top:445px;">2018/09/16</div>
<div style="left:713px;top:441px;width:72px;height:16px;background:#fff;box-sizing:border-box;border-top:1px solid #a0a0a0;border-left:1px solid #a0a0a0;border-right:1px solid #fff;border-bottom:1px solid #fff"></div>
<div style="left:714px;top:442px;width:70px;height:14px;background:#fff;box-sizing:border-box;border-top:1px solid #696969;border-left:1px solid #696969;border-right:1px solid #e3e3e3;border-bottom:1px solid #e3e3e3"></div>
<div class="s" style="left:716px;top:445px;">19:40</div>
<div style="left:767px;top:443px;width:17px;height:7px;background:#f0f0f0;box-sizing:border-box;border-top:1px solid #e3e3e3;border-left:1px solid #e3e3e3;border-right:1px solid #696969;border-bottom:1px solid #696969;box-shadow:inset 1px 1px 0 #fff,inset -1px -1px 0 #a0a0a0"></div>
<div style="left:767px;top:450px;width:17px;height:6px;background:#f0f0f0;box-sizing:border-box;border-top:1px solid #e3e3e3;border-left:1px solid #e3e3e3;border-right:1px solid #696969;border-bottom:1px solid #696969;box-shadow:inset 1px 1px 0 #fff,inset -1px -1px 0 #a0a0a0"></div>
<div style="left:775px;top:446px;width:1px;height:1px;background:#000;"></div>
<div style="left:775px;top:453px;width:1px;height:1px;background:#000;"></div>
<div style="left:0px;top:32px;width:1px;height:556px;background:#fff;"></div>
<div style="left:0px;top:585px;width:876px;height:2px;background:#fafafa;"></div>
<div style="left:0px;top:0px;width:877px;height:1px;background:#6f6f6f;"></div>
<div style="left:876px;top:0px;width:1px;height:588px;background:#6f6f6f;"></div>
<div style="left:0px;top:587px;width:877px;height:1px;background:#6f6f6f;"></div>
</body></html>
